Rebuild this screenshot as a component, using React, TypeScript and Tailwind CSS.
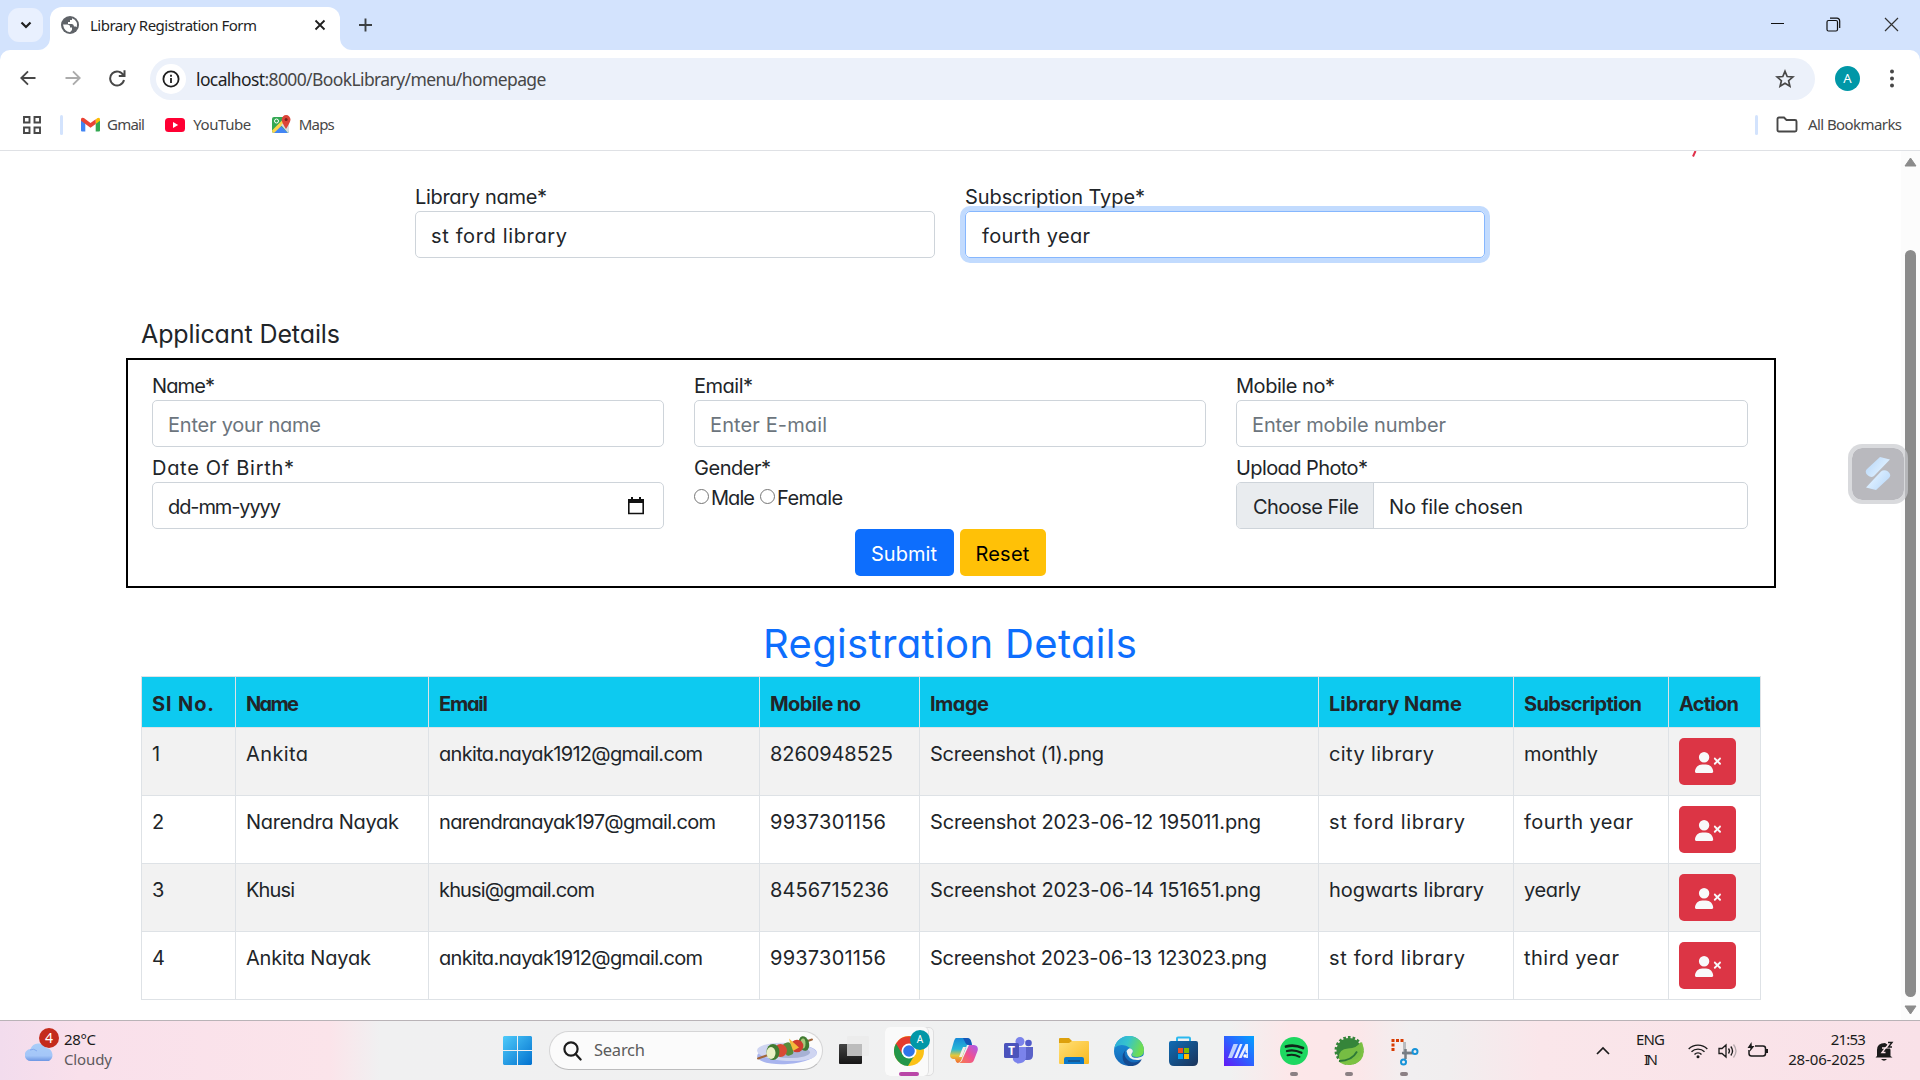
import { useLayoutEffect, useRef, type ReactNode } from "react";
import { FaUserXmark } from "react-icons/fa6";

/* Text whose tracking is adjusted so that it spans exactly `w` pixels. */
function Fit({ w, children, className = "" }: { w: number; children: string; className?: string }) {
  const ref = useRef<HTMLSpanElement>(null);
  useLayoutEffect(() => {
    const el = ref.current;
    if (!el) return;
    el.style.letterSpacing = "0px";
    const natural = el.getBoundingClientRect().width;
    const gap = (w - natural) / Math.max(children.length - 1, 1);
    el.style.letterSpacing = `${gap}px`;
  }, [w, children]);
  return (
    <span ref={ref} className={`inline-block whitespace-pre ${className}`}>
      {children}
    </span>
  );
}

function Label({ w, children }: { w: number; children: string }) {
  return (
    <div className="h-[30px] leading-[32px]">
      <Fit w={w}>{children}</Fit>
    </div>
  );
}

function Field({ label, lw, text, tw, muted }: { label: string; lw: number; text: string; tw: number; muted?: boolean }) {
  return (
    <div className="flex-1">
      <Label w={lw}>{label}</Label>
      <div
        className={`h-[47px] rounded-[5px] border border-[#ced4da] pl-[15px] leading-[48px] ${muted ? "text-[#6c757d]" : "text-[#212529]"}`}
      >
        <Fit w={tw}>{text}</Fit>
      </div>
    </div>
  );
}

function Browser() {
  return (
    <header className="font-['Noto_Sans',sans-serif] text-[15px]">
      <div className="flex h-[50px] bg-[#d3e3fd] pt-[7px]">
        <div className="mt-[1px] ml-2 flex h-[34px] w-[35px] items-center justify-center rounded-[11px] bg-[#e9f0fe]">
          <svg width="12" height="8" viewBox="0 0 12 8" fill="none" stroke="#1f1f1f" strokeWidth="2.2">
            <path d="M1.5 1.5 6 6l4.500-4.500" />
          </svg>
        </div>
        <div className="relative ml-[7px] flex h-[43px] w-[290px] items-center rounded-t-[12px] bg-white pb-[7px] pl-[11px]">
          <svg className="absolute -left-3 bottom-0" width="12" height="12"><path d="M12 0v12H0A12 12 0 0 0 12 0Z" fill="#fff" /></svg>
          <svg className="absolute -right-3 bottom-0" width="12" height="12"><path d="M0 0v12h12A12 12 0 0 1 0 0Z" fill="#fff" /></svg>
          <svg width="18" height="18" viewBox="0 0 18 18">
            <circle cx="9" cy="9" r="9" fill="#5f6368" />
            <path d="M2 8.500h4.500q2 0 2.500 1.500v1.500h2v2.500l-2 2.200Q3 15.500 2 8.500ZM11 2.200V4H9v2H7v2h4q1.800.3 2 2.500h1.800l1 .8Q17.500 5 11 2.200Z" fill="#fff" />
          </svg>
          <Fit w={167} className="ml-[11px] text-[#1f1f1f]">Library Registration Form</Fit>
          <svg className="mr-[14px] ml-auto" width="12" height="12" viewBox="0 0 12 12" stroke="#1f1f1f" strokeWidth="1.800"><path d="m1.500 1.500 9 9m0-9-9 9" /></svg>
        </div>
        <svg className="mt-[11px] ml-[18px]" width="15" height="14" viewBox="0 0 15 14" stroke="#3c4043" strokeWidth="1.900"><path d="M7.500 .5v13M1 7h13" /></svg>
        <div className="mt-[10px] mr-[21px] ml-auto flex gap-[43px]">
          <svg width="14" height="14" stroke="#111"><path d="M1 6.500h13" /></svg>
          <svg className="-ml-[1px]" width="15" height="15" viewBox="0 0 15 15" fill="none" stroke="#111" strokeWidth="1.200">
            <rect x="1" y="3.500" width="10.500" height="10.500" rx="1.500" />
            <path d="M4 1.200h7a2.700 2.700 0 0 1 2.700 2.700v7" />
          </svg>
          <svg width="15" height="15" viewBox="0 0 15 15" stroke="#333" strokeWidth="1.200"><path d="m1 1 13 13m0-13L1 14" /></svg>
        </div>
      </div>
      <div className="bg-[#d3e3fd]">
        <div className="flex h-[50px] items-start rounded-t-[10px] bg-white pt-2">
          <svg className="mt-[12px] ml-[20px]" width="16" height="16" viewBox="0 0 16 16" fill="none" stroke="#474747" strokeWidth="1.900"><path d="M15.500 8H1.500M8 1.300 1.300 8 8 14.700" /></svg>
          <svg className="mt-[12px] ml-[29px]" width="16" height="16" viewBox="0 0 16 16" fill="none" stroke="#ababab" strokeWidth="1.900"><path d="M.5 8h14M8 1.300 14.700 8 8 14.700" /></svg>
          <svg className="mt-[11px] ml-[28px]" width="17" height="18" viewBox="0 0 17 18" fill="none" stroke="#474747" strokeWidth="2"><path d="M14.500 6.500A7 7 0 1 0 15 11M15.500 1.200V7H9.800" /></svg>
          <div className="ml-[24px] flex h-[42px] w-[1665px] items-center rounded-full bg-[#ecf1fa] pl-[6px]">
            <div className="flex h-[30px] w-[30px] items-center justify-center rounded-full bg-white">
              <svg width="18" height="18" viewBox="0 0 18 18" fill="none" stroke="#1f1f1f" strokeWidth="1.800"><circle cx="9" cy="9" r="7.600" /><path d="M9 8v5M9 4.800v1.900" /></svg>
            </div>
            <div className="ml-[10px] flex text-[17.500px] text-[#474747]">
              <Fit w={69} className="text-[#1f1f1f]">localhost</Fit>
              <Fit w={282}>:8000/BookLibrary/menu/homepage</Fit>
            </div>
            <svg className="mr-[20px] ml-auto" width="20" height="20" viewBox="0 0 20 20" fill="none" stroke="#474747" strokeWidth="1.700">
              <path d="m10 2.300 2.200 5.200 5.700.5-4.300 3.700 1.300 5.600-4.900-3-4.900 3 1.300-5.600L2.100 8l5.700-.5Z" />
            </svg>
          </div>
          <div className="mt-[8px] ml-5 flex h-[25px] w-[25px] items-center justify-center rounded-full bg-[#0097a7] text-[13px] text-white">A</div>
          <svg className="mt-[11px] ml-[30px]" width="4" height="19" fill="#474747"><circle cx="2" cy="2.500" r="2" /><circle cx="2" cy="9.500" r="2" /><circle cx="2" cy="16.500" r="2" /></svg>
        </div>
      </div>
      <div className="flex h-[51px] items-center border-b border-[#dfe1e5] bg-white pb-[1px] text-[#474747]">
        <svg className="ml-[22px]" width="20" height="20" viewBox="0 0 20 20" fill="none" stroke="#474747" strokeWidth="1.900"><path d="M2 2h5.500v5.500H2zM12.500 2H18v5.500h-5.500zM2 12.500h5.500V18H2zM12.500 12.500H18V18h-5.500z" /></svg>
        <div className="ml-[18px] h-5 w-[3px] rounded-full bg-[#d3e3fd]" />
        <svg className="ml-[18px]" width="19" height="15" viewBox="0 0 19 15">
          <path d="M0 2.500V13.500Q0 14.500 1 14.500H4.300V5Z" fill="#4285f4" /><path d="M19 2.500V13.500q0 1-1 1h-3.300V5Z" fill="#34a853" />
          <path d="M14.700 2.800 16 1.300Q19-.3 19 2.500V3.700l-4.300 3.200Z" fill="#fbbc04" /><path d="M0 2.500Q0-.3 2.900 1.100L9.500 6.100l5.200-3.900v4.700L9.500 10.800 0 3.700Z" fill="#ea4335" />
        </svg>
        <Fit w={38} className="-mt-[1px] ml-[7px]">Gmail</Fit>
        <svg className="ml-[21px]" width="20" height="14" viewBox="0 0 20 14"><rect width="20" height="14" rx="3.500" fill="#f03" /><path d="m8 4 5.200 3L8 10Z" fill="#fff" /></svg>
        <Fit w={58} className="-mt-[1px] ml-[8px]">YouTube</Fit>
        <svg className="ml-[21px]" width="19" height="19" viewBox="0 0 19 19">
          <rect x="0" y="2" width="17" height="16" rx="2" fill="#34a853" /><path d="m1 18 7.500-7.500L16 18Z" fill="#4285f4" /><path d="m0 15.500 12-12 2.500 2.500L2 18Q0 18 0 15.500Z" fill="#fdd54a" />
          <path d="m9 10 8-6v12q0 1-1 2Z" fill="#dadce0" /><path d="M14 14Q9.500 7 9.700 4.500A4.400 4.400 0 0 1 18.500 4.500Q18.500 7 14 14Z" fill="#dc4438" /><circle cx="14.100" cy="4.500" r="1.500" fill="#7c211b" /><circle cx="4.500" cy="6" r="2" fill="none" stroke="#fff" strokeWidth="1" />
        </svg>
        <Fit w={36} className="-mt-[1px] ml-[8px]">Maps</Fit>
        <div className="ml-auto h-5 w-[3px] rounded-full bg-[#d3e3fd]" />
        <svg className="mr-[10px] ml-[18px]" width="22" height="17" viewBox="0 0 22 17" fill="none" stroke="#474747" strokeWidth="1.900"><path d="M3 1.500h5L10.500 4H19q1.500 0 1.500 1.500v8.500q0 1.500-1.500 1.500H3q-1.500 0-1.500-1.500V3Q1.500 1.500 3 1.500Z" /></svg>
        <div className="-mt-[1px] w-[112px]"><Fit w={94}>All Bookmarks</Fit></div>
      </div>
    </header>
  );
}

const columns: [string, number, string][] = [
  ["Sl No.", 62, "w-[94px]"],
  ["Name", 53, "w-[193px]"],
  ["Email", 49, "w-[331px]"],
  ["Mobile no", 91, "w-[160px]"],
  ["Image", 59, "w-[399px]"],
  ["Library Name", 133, "w-[195px]"],
  ["Subscription", 118, "w-[155px]"],
  ["Action", 60, "w-[92px]"],
];

const rows: [string, number][][] = [
  [["1", 8], ["Ankita", 62], ["ankita.nayak1912@gmail.com", 264], ["8260948525", 123], ["Screenshot (1).png", 174], ["city library", 105], ["monthly", 74]],
  [["2", 11], ["Narendra Nayak", 153], ["narendranayak197@gmail.com", 277], ["9937301156", 116], ["Screenshot 2023-06-12 195011.png", 331], ["st ford library", 136], ["fourth year", 109]],
  [["3", 11], ["Khusi", 49], ["khusi@gmail.com", 156], ["8456715236", 119], ["Screenshot 2023-06-14 151651.png", 331], ["hogwarts library", 155], ["yearly", 57]],
  [["4", 11], ["Ankita Nayak", 125], ["ankita.nayak1912@gmail.com", 264], ["9937301156", 116], ["Screenshot 2023-06-13 123023.png", 337], ["st ford library", 136], ["third year", 95]],
];

function Page() {
  return (
    <div className="flex h-[869px] bg-white">
      <main className="relative w-[1901px] pt-[30px] font-['Comic_Sans_MS','Inter',sans-serif] text-[20px] text-[#212529] [font-feature-settings:'cv11','ss03']">
        <svg className="absolute top-0 left-[1691px]" width="6" height="6"><path d="M4.500 0 2 5.500" stroke="#e0304a" strokeWidth="2" /></svg>
        <section className="ml-[415px] flex w-[1070px] gap-[30px]">
          <Field label="Library name*" lw={132} text="st ford library" tw={136} />
          <div className="flex-1">
            <Label w={180}>Subscription Type*</Label>
            <div className="h-[47px] rounded-[5px] border border-[#86b7fe] pl-[16px] leading-[48px] shadow-[0_0_0_5px_#c2dbfe]">
              <Fit w={108}>fourth year</Fit>
            </div>
          </div>
        </section>

        <h4 className="mt-[57px] ml-[141px] h-[38px] text-[25px] leading-[38px]"><Fit w={199}>Applicant Details</Fit></h4>
        <section className="mt-[5px] ml-[126px] h-[230px] w-[1650px] border-2 border-black pt-[10px] pr-[26px] pl-[24px]">
          <div className="flex gap-[30px]">
            <Field label="Name*" lw={63} text="Enter your name" tw={153} muted />
            <Field label="Email*" lw={59} text="Enter E-mail" tw={117} muted />
            <Field label="Mobile no*" lw={99} text="Enter mobile number" tw={194} muted />
          </div>
          <div className="mt-[5px] flex gap-[30px]">
            <div className="flex-1">
              <Label w={142}>Date Of Birth*</Label>
              <div className="flex h-[47px] items-center rounded-[5px] border border-[#ced4da] pr-[19px] pl-[15px]">
                <Fit w={113} className="mt-[2px]">dd-mm-yyyy</Fit>
                <svg className="ml-auto" width="16" height="18" viewBox="0 0 16 18"><path d="M.8 3.500h14.400v13H.8Z" fill="none" stroke="#111" strokeWidth="1.600" /><path d="M0 2h16v4H0ZM3 0h2v3H3ZM11 0h2v3h-2Z" fill="#111" /></svg>
              </div>
            </div>
            <div className="flex-1">
              <Label w={77}>Gender*</Label>
              <div className="mt-[1px] flex h-[30px] items-center leading-[30px]">
                <span className="mb-[3px] h-[15px] w-[15px] rounded-full border border-[#767676]" />
                <Fit w={44} className="ml-[2px]">Male</Fit>
                <span className="mb-[3px] ml-[6px] h-[15px] w-[15px] rounded-full border border-[#767676]" />
                <Fit w={66} className="ml-[2px]">Female</Fit>
              </div>
            </div>
            <div className="flex-1">
              <Label w={132}>Upload Photo*</Label>
              <div className="flex h-[47px] overflow-hidden rounded-[5px] border border-[#ced4da] leading-[48px]">
                <div className="w-[137px] border-r border-[#ced4da] bg-[#e9ecef] pl-[16px]"><Fit w={106}>Choose File</Fit></div>
                <Fit w={134} className="ml-[15px]">No file chosen</Fit>
              </div>
            </div>
          </div>
          <div className="flex justify-center gap-[6px] leading-[50px]">
            <button className="flex h-[47px] w-[99px] justify-center rounded-[5px] bg-[#0d6efd] text-white"><Fit w={66}>Submit</Fit></button>
            <button className="flex h-[47px] w-[86px] justify-center rounded-[5px] bg-[#ffc107] text-black"><Fit w={54}>Reset</Fit></button>
          </div>
        </section>

        <h2 className="mt-[32px] ml-[763px] h-[48px] text-[40px] leading-[48px] text-[#0d6efd]"><Fit w={374}>Registration Details</Fit></h2>
        <table className="mt-[8px] ml-[141px] w-[1620px] table-fixed border-collapse text-left">
          <thead>
            <tr className="h-[51px] bg-[#0dcaf0]">
              {columns.map(([name, w, cls]) => (
                <th key={name} className={`border border-[#dee2e6] pt-[3px] pl-[10px] font-bold ${cls}`}><Fit w={w}>{name}</Fit></th>
              ))}
            </tr>
          </thead>
          <tbody>
            {rows.map((row, i) => (
              <tr key={i} className="h-[68px] align-top odd:bg-[#f2f2f2]">
                {row.map(([text, w], j) => (
                  <td key={j} className="border border-[#dee2e6] pt-[11px] pl-[10px] leading-[30px]"><Fit w={w}>{text}</Fit></td>
                ))}
                <td className="border border-[#dee2e6] pt-[10px] pl-[10px]">
                  <button className="flex h-[47px] w-[57px] items-center justify-center rounded-[5px] bg-[#dc3545] pt-[2px] text-[#f8f9fa]"><FaUserXmark className="h-[21px] w-[26px]" /></button>
                </td>
              </tr>
            ))}
          </tbody>
        </table>
      </main>
      <aside className="relative flex w-[19px] flex-col items-center bg-[#fcfcfc] pt-[6px]">
        <svg width="13" height="10"><path d="M6.500 1 12 9H1Z" fill="#8b8b8b" stroke="#8b8b8b" strokeLinejoin="round" /></svg>
        <div className="mt-[83px] h-[747px] w-[11px] rounded-full bg-[#8b8b8b]" />
        <svg className="mt-[8px]" width="13" height="10"><path d="M6.500 9 12 1H1Z" fill="#8b8b8b" stroke="#8b8b8b" strokeLinejoin="round" /></svg>
        <div className="absolute top-[293px] -left-[53px] flex h-[60px] w-[60px] items-center justify-center rounded-[14px] border-4 border-[#c9cacf]/70 bg-[#a7a8ae]/80 bg-clip-padding">
          <svg width="26" height="34" viewBox="0 0 26 34">
            <defs><linearGradient id="wing" x1="0" y1="0" x2="1" y2="1"><stop stopColor="#b4d5f8" /><stop offset=".5" stopColor="#d8ecff" /><stop offset="1" stopColor="#b4d5f8" /></linearGradient></defs>
            <path d="M15 0 25 2.500 9 19Q6 21 3 18.500-1 15 2 12ZM11 33 1 30.500 16 14.500Q19 12 23 14.500 27 18 24 21Z" fill="url(#wing)" />
          </svg>
        </div>
      </aside>
    </div>
  );
}

function Slot({ children, active }: { children: ReactNode; active?: boolean }) {
  return (
    <div className="relative flex h-[58px] w-[55px] shrink-0 items-center justify-center">
      {children}
      {active && <span className="absolute bottom-[4px] h-[4px] w-[8px] rounded-full bg-[#8b8084]" />}
    </div>
  );
}

function Taskbar() {
  return (
    <footer className="flex h-[60px] items-center border-t border-[#b9b3b7] bg-[linear-gradient(90deg,#f2dced_0px,#f9e0eb_80px,#fbe4ea_330px,#f0f0f1_380px,#f0f1f1_1230px,#fde7e9_1290px,#fbe7e9_1360px,#f1eff0_1410px,#f1eeef_1450px,#fae6ea_1540px,#f9e1e8_1920px)] font-['Noto_Sans',sans-serif] text-[15px] text-[#1b1b1b]">
      <div className="relative ml-[25px] h-[32px] w-[39px] pt-[6px]">
        <svg width="30" height="21" viewBox="0 0 30 21"><defs><linearGradient id="cloud" x1="0" y1="0" x2="0" y2="1"><stop stopColor="#a9cdf8" /><stop offset=".7" stopColor="#a4c6f8" /><stop offset="1" stopColor="#6c96e3" /></linearGradient></defs><path d="M6 20a6 6 0 0 1-.5-12A8.500 8.500 0 0 1 21 7a7 7 0 0 1 3 13Z" fill="url(#cloud)" /><path d="M5 9q4-2 7 1" stroke="#83aaf0" fill="none" /></svg>
        <span className="absolute -top-[7px] left-[14px] flex h-5 w-5 items-center justify-center rounded-full bg-[#c42b1c] text-[14px] text-white">4</span>
      </div>
      <div className="mb-[4px] w-[438px] leading-[20px]">
        <div><Fit w={32}>28°C</Fit></div>
        <div className="text-[#5d5a5d]"><Fit w={48}>Cloudy</Fit></div>
      </div>
      <svg className="ml-[1px]" width="29" height="29" viewBox="0 0 29 29"><defs><linearGradient id="win" x1="0" y1="0" x2="1" y2="1"><stop stopColor="#4fcbfa" /><stop offset="1" stopColor="#0271cf" /></linearGradient></defs><path d="M1 0h13v14H0V1ZM15 0h13l1 1v13H15ZM0 15h14v14H1l-1-1ZM15 15h14v13l-1 1H15Z" fill="url(#win)" /></svg>
      <div className="ml-[17px] flex h-[39px] w-[274px] items-center rounded-full border border-[#d5d5d6] border-b-[#bcbcbd] bg-[#fbfbfb] pl-[13px]">
        <svg width="19" height="20" viewBox="0 0 19 20" fill="none" stroke="#1c1c1c" strokeWidth="2.200"><circle cx="8" cy="8" r="6.600" /><path d="m12.600 13 5 5.500" strokeLinecap="round" /></svg>
        <Fit w={51} className="ml-[12px] text-[16.500px] text-[#5c5c5c]">Search</Fit>
        <svg className="mr-[4px] ml-auto" width="62" height="30" viewBox="0 0 62 30">
          <g transform="translate(0 -1.500)">
            <ellipse cx="31" cy="20" rx="30" ry="9.500" fill="#a8b4ee" transform="rotate(-4 31 20)" /><ellipse cx="31" cy="17.500" rx="30" ry="9" fill="#cfd5f1" transform="rotate(3 31 17)" /><ellipse cx="34" cy="18" rx="20" ry="5.500" fill="#a7b1d4" />
            <path d="M2 24 56 5" stroke="#a1663b" strokeWidth="2" strokeLinecap="round" />
            <ellipse cx="48" cy="9" rx="5" ry="7.500" fill="#417b31" transform="rotate(-15 48 9)" /><ellipse cx="47" cy="9" rx="2.500" ry="5" fill="#a8c979" />
            <circle cx="41" cy="11.500" r="6.300" fill="#cf3d2e" /><path d="m33 4 10 9-7 4Z" fill="#f4b93b" />
            <rect x="28" y="8" width="8" height="13" rx="3" fill="#568b3a" transform="rotate(-20 32 14)" />
            <circle cx="24.500" cy="16" r="6.500" fill="#d84a34" /><ellipse cx="17" cy="17.500" rx="6.500" ry="8" fill="#417b31" /><ellipse cx="15" cy="18.500" rx="4.500" ry="6" fill="#eaf0c6" />
          </g>
        </svg>
      </div>
      <div className="ml-[3px] flex">
        <Slot><svg className="ml-[2px]" width="31" height="29" viewBox="0 0 31 29"><defs><linearGradient id="tv" x1="0" y1="0" x2="0" y2="1"><stop stopColor="#444" /><stop offset="1" stopColor="#161616" /></linearGradient></defs><rect y="8" width="23" height="20" rx="1" fill="url(#tv)" /><rect x="8" y="0" width="22" height="20" rx="1" fill="#ebebeb" fillOpacity=".9" /><rect x="8" y="8" width="15" height="12" fill="#bcbcbc" /></svg></Slot>
        <Slot>
          <div className="absolute top-[5px] left-[4px] h-[49px] w-[49px] rounded-[5px] border border-[#dfdfe0] bg-[#f6f6f6]" />
          <div className="absolute top-[5px] left-[4px] h-[49px] w-[44px] rounded-[5px] border-r border-[#dfdfe0] bg-[#fafafa]" />
          <svg className="relative" width="30" height="30" viewBox="0 0 30 30">
            <circle cx="15" cy="15" r="15" fill="#fbc116" /><path d="M15 15 2 7.500A15 15 0 0 0 14 30L21 18.500Z" fill="#23964a" /><path d="M2 7.500A15 15 0 0 1 28 8H15L8.500 18.500Z" fill="#e33b2e" />
            <circle cx="15" cy="15" r="7.500" fill="#fff" /><circle cx="15" cy="15" r="5.800" fill="#2f74ea" />
          </svg>
          <span className="absolute top-[8px] left-[29px] flex h-5 w-5 items-center justify-center rounded-full bg-[#0097a7] text-[10px] text-white">A</span>
          <span className="absolute bottom-[4px] left-[18px] h-[4px] w-[20px] rounded-full bg-[#b946a7]" />
        </Slot>
        <Slot><svg width="28" height="27" viewBox="0 0 28 27">
          <defs><linearGradient id="cpa" x1="0" y1="0" x2="0" y2="1"><stop stopColor="#1689d8" /><stop offset=".45" stopColor="#28b7d6" /><stop offset=".7" stopColor="#e4c83b" /><stop offset="1" stopColor="#f2692f" /></linearGradient><linearGradient id="cpb" x1="1" y1="0" x2="0" y2="1"><stop stopColor="#a65cf0" /><stop offset=".5" stopColor="#ee5095" /><stop offset="1" stopColor="#f78048" /></linearGradient></defs>
          <path d="M6 1h11q3 0 4 3l1 4h-5l-5 13q-1 4-4 5-2 0-3-4H3q-4-1-2.500-6L4 4Q5 1 6 1Z" fill="url(#cpa)" /><path d="M13 1h4q3 0 4 3l1 4h-3q-3 0-4-3Z" fill="#1557b8" /><path d="M19 8h5q5 1 3.500 6L24 23q-1 3-4 3H9q3-1 4-5Z" fill="url(#cpb)" /><path d="m13 10 3 0-4 10-3 0Z" fill="#f2efe8" />
        </svg></Slot>
        <Slot><svg width="30" height="27" viewBox="0 0 30 27"><circle cx="16" cy="4.500" r="4.500" fill="#7b83eb" /><circle cx="24.500" cy="6" r="3.300" fill="#5059c9" /><path d="M20 10h9v8q0 5-5 5h-4Z" fill="#5a62c8" /><path d="M8 10h14v9a7 7 0 0 1-13 4Z" fill="#7b83eb" /><rect y="6" width="15" height="15" rx="1.500" fill="#4b53bc" /><text x="7.500" y="18" textAnchor="middle" fill="#fff" fontFamily="Open Sans" fontWeight="700" fontSize="12">T</text></svg></Slot>
        <Slot><svg width="30" height="28" viewBox="0 0 30 28"><defs><linearGradient id="fold" x1="0" y1="0" x2="1" y2="1"><stop stopColor="#ffe079" /><stop offset="1" stopColor="#fab91d" /></linearGradient></defs><path d="M0 2Q0 1 1 1h9l3 3v4H0Z" fill="#dda00c" /><path d="M0 6h10l3-2h16q1 0 1 1v21q0 1-1 1H1q-1 0-1-1Z" fill="url(#fold)" /><path d="M5 27v-5q0-2 2-2h16q2 0 2 2v5Z" fill="#0b78cb" /><path d="M9 24h12" stroke="#174f86" strokeWidth="1.500" /></svg></Slot>
        <Slot><svg width="30" height="30" viewBox="0 0 30 30"><defs><linearGradient id="ed" x1="0" y1="0" x2="1" y2=".3"><stop stopColor="#2ba8dd" /><stop offset=".5" stopColor="#36c4cc" /><stop offset="1" stopColor="#70dd50" /></linearGradient><linearGradient id="ee" x1="0" y1="0" x2="0" y2="1"><stop stopColor="#1b96dc" /><stop offset="1" stopColor="#1465b7" /></linearGradient></defs><circle cx="15" cy="15" r="15" fill="url(#ee)" /><path d="M.3 12A15 15 0 0 1 30 14q0 7-7 7-6 0-5-3 2-3-1-5.500Q7 6 .3 12Z" fill="url(#ed)" /><path d="M12 13q-4 7 3 12 6 4 13-2-4 8-13 7Q7 27 9 18Z" fill="#154a8f" /><path d="M12.500 15q3-5 6-1 1 2-1 4-1 4 6 3.800 4-.5 8-3.500v2.500q-3 2.500-5.500 3-12 1.500-13.500-8.800Z" fill="#f0f1f1" /></svg></Slot>
        <Slot><svg width="29" height="30" viewBox="0 0 29 30"><defs><linearGradient id="st" x1="0" y1="0" x2="1" y2="1"><stop stopColor="#0f6cb5" /><stop offset="1" stopColor="#1b3359" /></linearGradient></defs><path d="M8 6V2.500Q8 1.500 9 1.500h11q1 0 1 1V6" stroke="#2cb9ef" strokeWidth="2" fill="none" /><path d="M0 7q0-2 2-2h25q2 0 2 2v18q0 5-5 5H5q-5 0-5-5Z" fill="url(#st)" /><path d="M9 12h5v5H9Z" fill="#f25022" /><path d="M15 12h5v5h-5Z" fill="#7fba00" /><path d="M9 18h5v5H9Z" fill="#00a4ef" /><path d="M15 18h5v5h-5Z" fill="#ffb900" /></svg></Slot>
        <Slot><svg width="30" height="30" viewBox="0 0 30 30"><defs><linearGradient id="ma" x1="0" y1="1" x2="1" y2="0"><stop stopColor="#6418f5" /><stop offset=".5" stopColor="#2d61ff" /><stop offset="1" stopColor="#02a3ff" /></linearGradient></defs><path d="M0 0h30v30H0Z" fill="url(#ma)" /><path d="m4 22 5.500-14h4.500L8 22Z" fill="#bcd0ff" /><path d="m10 22 6-14h2.500l-5.500 14ZM14.500 22 21.500 8H24v10l-2.500-1.500V13.500L17.500 22Z" fill="#e8eeff" /><circle cx="21" cy="20" r="1.700" fill="#fff" /><path d="M22.500 18.500 24 17v5h-2Z" fill="#e8eeff" /></svg></Slot>
        <Slot active><svg width="28" height="28" viewBox="0 0 28 28" fill="none" stroke="#10271a" strokeLinecap="round"><circle cx="14" cy="14" r="14" fill="#1ed760" stroke="none" /><path d="M6 9.500q8-2.500 17 1.500" strokeWidth="2.700" /><path d="M7 14q7-2 14.500 1.800" strokeWidth="2.300" /><path d="M7.500 18.300q6-1.700 12 1.500" strokeWidth="2" /></svg></Slot>
        <Slot active><svg width="30" height="30" viewBox="0 0 30 30"><circle cx="15" cy="14.500" r="12.500" fill="#35853a" /><circle cx="15" cy="14.500" r="13" fill="none" stroke="#35853a" strokeWidth="3" strokeDasharray="2.600 2" /><path d="M28 6q6 18-9 22.500-8 2-14.500-3Z" fill="#7cc242" /><path d="M5 23Q4 13 14 12.500q9 0 12.500-6.500Q31 24 16 24q-5 0-9 1Z" fill="#76bd43" /><path d="M5 25q13 0 18-9.500" fill="none" stroke="#2d7937" strokeWidth="1.800" /></svg></Slot>
        <Slot active><svg width="30" height="30" viewBox="0 0 30 30" fill="none"><path d="M14.500 4.500H4V16" stroke="#d83b01" strokeWidth="3" strokeDasharray="3 1.500" /><path d="M15.500 6v11h8" stroke="#b9bcc0" strokeWidth="3" /><path d="M13 17h11M16.500 13v10" stroke="#777d84" strokeWidth="2.500" /><circle cx="26" cy="15.500" r="2.500" stroke="#1793d8" strokeWidth="2" /><circle cx="14.500" cy="26" r="2.500" stroke="#1793d8" strokeWidth="2" /></svg></Slot>
      </div>
      <div className="mr-[26px] ml-auto flex items-center">
        <svg width="14" height="9" viewBox="0 0 14 9" fill="none" stroke="#1b1b1b" strokeWidth="1.700"><path d="m1 8 6-6 6 6" /></svg>
        <div className="mb-[3px] ml-[26px] w-[30px] leading-[20px]"><div><Fit w={29}>ENG</Fit></div><div className="pl-[8px]"><Fit w={14}>IN</Fit></div></div>
        <svg className="ml-[22px]" width="20" height="16" viewBox="0 0 20 16" fill="none" stroke="#1b1b1b" strokeWidth="1.400"><path d="M.7 6a13 13 0 0 1 18.600 0M3.500 8.800a9.200 9.200 0 0 1 13 0M6.500 11.500a5 5 0 0 1 7 0" /><circle cx="10" cy="13.800" r="1.500" fill="#1b1b1b" stroke="none" /></svg>
        <svg className="ml-[10px]" width="20" height="16" viewBox="0 0 20 16" fill="none" stroke="#1b1b1b" strokeWidth="1.300"><path d="M1 5.500h3L8 2v12l-4-3.500H1ZM10.500 5.500q2 2.500 0 5M12.800 3.500q3.500 4.500 0 9" /><path d="M15.500 1.500q5 6.500 0 13" stroke="#b5a9ad" /></svg>
        <svg className="ml-[9px]" width="22" height="17" viewBox="0 0 22 17" fill="none" stroke="#1b1b1b" strokeWidth="1.500"><path d="M8 4h8q2.500 0 2.500 2.500v5Q18.500 14 16 14H4.500Q2 14 2 11.500V8" /><path d="M19 7h2v4h-2Z" fill="#1b1b1b" stroke="none" /><path d="M4.500 0 .5 6h3l-1 4 5-6H4.800Z" fill="#1b1b1b" stroke="none" /></svg>
        <div className="mb-[4px] ml-[18px] w-[78px] text-right leading-[20px]"><div><Fit w={35}>21:53</Fit></div><div><Fit w={77}>28-06-2025</Fit></div></div>
        <svg className="ml-[10px]" width="19" height="20" viewBox="0 0 19 20"><path d="M2 15V9q0-7 8-7 5 3 5.500 7v6l2 1.500H.5ZM6 18h6q-3 3.500-6 0Z" fill="#1b1b1b" /><path d="M7 7h3.500L7 11.500h3.500" stroke="#f9e3e9" strokeWidth="1.400" fill="none" /><path d="M12 1h5l-4.500 5H17" stroke="#f9e3e9" strokeWidth="3" fill="none" /><path d="M13 1.500h4L13.500 6H17" stroke="#1b1b1b" strokeWidth="1.400" fill="none" /></svg>
      </div>
    </footer>
  );
}

export default function App() {
  return (
    <div className="h-[1080px] w-[1920px] overflow-hidden bg-white">
      <Browser />
      <Page />
      <Taskbar />
    </div>
  );
}
